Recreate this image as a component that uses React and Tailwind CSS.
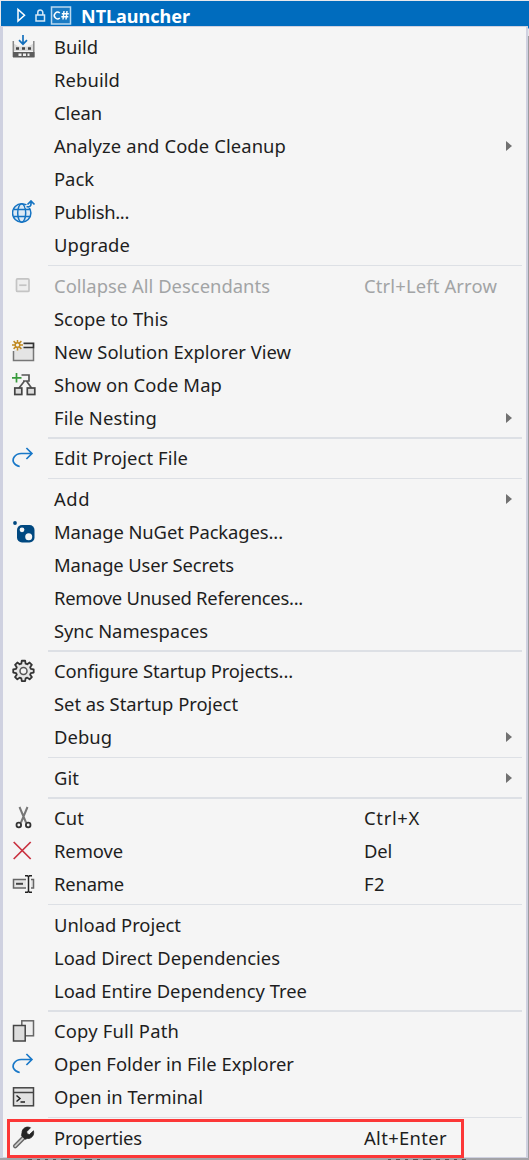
import { useLayoutEffect, useRef } from 'react';

const S = ({ children, ...p }) => (
  <svg width="24" height="24" viewBox="0 0 24 24" fill="none" strokeWidth="1.5" {...p}>{children}</svg>
);

const icons = {
  build: (
    <S>
      <path d="M1.5 8.500l5.500 3h9l5.500-3V16h-20z" fill="#d9d9d9" />
      <path d="M1.300 6v16M21.800 6v16" stroke="#888" />
      <path d="M1 17h21.500v5.500H1z" fill="#5c5c5c" />
      <path d="M4 13.500h3M10 13.500h3M16 13.500h3" stroke="#444" strokeWidth="2.500" />
      <path d="M6.500 19.700h3M11 19.700h3M15.500 19.700h2" stroke="#eee" strokeWidth="2.500" />
      <path d="M11 0v9M7 5.200l4 4 4-4" stroke="#1470bd" strokeWidth="1.700" />
    </S>
  ),
  publish: (
    <S stroke="#1573c2" strokeWidth="1.5">
      <circle cx="9.700" cy="13" r="9.200" fill="#dce9f4" />
      <ellipse cx="9.700" cy="13" rx="4" ry="9.200" />
      <path d="M1.500 9.500h16.500M1.500 16.500h16.500" />
      <path d="M13.500 6.500h5V2" stroke="#f5f5f5" strokeWidth="3" />
      <path d="M14.500 6.500c3 1 4.500-.5 4.500-2.500V1.500M15.500 4.500l3.500-3.500L22.500 4.500" strokeWidth="1.700" />
    </S>
  ),
  collapse: (
    <S stroke="#c4c4c4" strokeWidth="1.7">
      <rect x="4.500" y="4.900" width="12.500" height="12.500" rx="1" fill="#eee" />
      <path d="M7.200 11.200h7.300" />
    </S>
  ),
  view: (
    <S>
      <path d="M1.500 11v9.500h20V5.500H12z" fill="#e4e4e4" />
      <path d="M1.500 11v9.500h20V8" stroke="#777" />
      <path d="M11.500 3.300h10v4.200H11.500" stroke="#333" strokeWidth="1.700" />
      <path d="M5.500-.5v11M0 5h11M1.600 1.100l7.800 7.800M9.400 1.100L1.600 8.900" stroke="#c08a22" />
      <circle cx="5.500" cy="5" r="2.300" fill="#f5f5f5" stroke="#c08a22" />
    </S>
  ),
  map: (
    <S stroke="#444" strokeWidth="1.700">
      <path d="M9.500 2h7.500v6h-6M12.500 8l-5.500 7M14.500 8l5 7" stroke="#555" />
      <rect x="2.800" y="15" width="7" height="6.500" fill="#ddd" />
      <rect x="15.300" y="15" width="7.500" height="6.500" fill="#ddd" />
      <path d="M4.500 0v9.500M0 4.800H9.500" stroke="#389b3c" />
    </S>
  ),
  redo: (
    <S stroke="#1978c8" strokeWidth="1.7">
      <path d="M7.700 20.500C1.700 19.500-.3 14.500 2.200 11 3.700 8.800 6.200 7.500 9.200 7.500h11M14.400 2l5.500 5.500-5.500 5.500" />
    </S>
  ),
  nuget: (
    <S>
      <circle cx="3" cy="3" r="1.900" fill="#004880" />
      <rect x="5" y="5" width="17.500" height="17.500" rx="5" fill="#004880" />
      <circle cx="10" cy="9.800" r="2.400" fill="#f5f5f5" />
      <circle cx="16.700" cy="16.700" r="3.500" fill="#f5f5f5" />
    </S>
  ),
  gear: (
    <S stroke="#333" strokeWidth="1.900" strokeLinejoin="round">
      <path transform="translate(.3 .3) scale(.95)" d="M10 1.500h3.500l.5 3 1.700.7 2.500-1.800 2.400 2.400-1.800 2.500.7 1.700 3 .5V14l-3 .5-.7 1.700 1.800 2.500-2.400 2.400-2.500-1.800-1.700.7-.5 3H10l-.5-3-1.700-.7-2.500 1.800-2.400-2.400 1.800-2.500L4 14.500 1 14v-3.500l3-.5.7-1.700-1.800-2.500 2.400-2.400 2.500 1.800 1.700-.7z" fill="#e6e6e6" />
      <circle cx="11.500" cy="12" r="3.500" fill="#f5f5f5" stroke="#555" strokeWidth="1.500" />
    </S>
  ),
  cut: (
    <S stroke="#333" strokeWidth="1.800">
      <path d="M7.500 1L14 16.500M15.500 1L9 16.500" stroke="#777" strokeWidth="2" />
      <circle cx="6.800" cy="19" r="2.300" />
      <circle cx="16.200" cy="19" r="2.300" />
    </S>
  ),
  remove: <S stroke="#c9303e" strokeWidth="1.7"><path d="M1.700 3l17 17M18.700 3l-17 17" /></S>,
  rename: (
    <S stroke="#666">
      <path d="M14 7.500H1.500v8.500H14M19 7.500h2.500v8.500h-2.500" fill="#e5e5e5" />
      <path d="M4 11.800h7" strokeWidth="2" stroke="#444" />
      <path d="M13 3.800h2.500l1 1 1-1H20M16.500 4.500v15M13 20.200h2.500l1-1 1 1H20" stroke="#222" />
    </S>
  ),
  copy: (
    <S stroke="#444">
      <rect x="9.800" y="1.800" width="11.700" height="15" fill="#eee" stroke="#666" />
      <rect x="1.500" y="6.500" width="11.700" height="15.500" fill="#ddd" />
    </S>
  ),
  terminal: (
    <S stroke="#444">
      <rect x="1.500" y="2.800" width="20" height="18" fill="#e2e2e2" />
      <path d="M1.500 7.500h20" />
      <path d="M4.500 10.500l3.500 3-3.500 3M8.500 17h4.500" stroke="#222" />
    </S>
  ),
  wrench: (
    <S>
      <path d="M3.200 20.200l10-10" stroke="#666" strokeWidth="4.500" strokeLinecap="round" />
      <path d="M3.200 20.200l10-10" stroke="#ccc" strokeWidth="1.700" strokeLinecap="round" />
      <path d="M18.500 1.700l-3.800 4 .5 2.300 2.300.5 4-3.700c1 4.500-2 8-6 7.700l-2.500.7-3.500-3.500.5-3c0-4 4-7 8.500-5z" fill="#252525" stroke="#252525" strokeWidth=".8" />
    </S>
  ),
};

// label, label width, icon, shortcut ('>' opens a submenu), shortcut width, disabled
const groups = [
  [['Build', 44, 'build'], ['Rebuild', 66], ['Clean', 48], ['Analyze and Code Cleanup', 232, null, '>'], ['Pack', 40], ['Publish...', 75, 'publish'], ['Upgrade', 76]],
  [['Collapse All Descendants', 216, 'collapse', 'Ctrl+Left Arrow', 133, true], ['Scope to This', 114], ['New Solution Explorer View', 237, 'view'], ['Show on Code Map', 168, 'map'], ['File Nesting', 103, null, '>']],
  [['Edit Project File', 134, 'redo']],
  [['Add', 36, null, '>'], ['Manage NuGet Packages...', 229, 'nuget'], ['Manage User Secrets', 180], ['Remove Unused References...', 249], ['Sync Namespaces', 154]],
  [['Configure Startup Projects...', 239, 'gear'], ['Set as Startup Project', 184], ['Debug', 58, null, '>']],
  [['Git', 25, null, '>']],
  [['Cut', 30, 'cut', 'Ctrl+X', 56], ['Remove', 69, 'remove', 'Del', 28], ['Rename', 70, 'rename', 'F2', 21]],
  [['Unload Project', 127], ['Load Direct Dependencies', 226], ['Load Entire Dependency Tree', 253]],
  [['Copy Full Path', 125, 'copy'], ['Open Folder in File Explorer', 240, 'redo'], ['Open in Terminal', 149, 'terminal']],
  [['Properties', 88, 'wrench', 'Alt+Enter', 83]],
];

// Spaces the letters so that the text takes the given width.
function Fit({ text, width }) {
  const ref = useRef(null);
  useLayoutEffect(() => {
    const el = ref.current;
    el.style.letterSpacing = '0px';
    const natural = el.getBoundingClientRect().width;
    el.style.letterSpacing = `${(width - natural) / text.length}px`;
  }, [text, width]);
  return <span ref={ref} className="block w-max pb-[2px] leading-[26px]">{text}</span>;
}

function Row({ item: [label, width, icon, extra, extraWidth, disabled] }) {
  return (
    <div className={`flex h-[33px] items-center whitespace-nowrap ${disabled ? 'text-[#a2a4a5]' : 'text-[#1e1e1e]'}`}>
      <div className="ml-[9px] w-[42px] shrink-0 pb-[2px]">{icon && icons[icon]}</div>
      <div className="w-[310px] shrink-0"><Fit text={label} width={width} /></div>
      {extra === '>' ? (
        <svg className="mb-px ml-[141px]" width="7" height="10" viewBox="0 0 7 10"><path d="M1 0l6 5-6 5z" fill="#717171" /></svg>
      ) : extra && <Fit text={extra} width={extraWidth} />}
    </div>
  );
}

export default function App() {
  return (
    <div className="relative flex h-[1160px] w-[529px] flex-col overflow-hidden bg-[#9b9b9f] font-['Noto_Sans',sans-serif] text-[18.4px]">
      <header className="flex h-[26px] shrink-0 items-center border-t border-l border-[#e8e8ec] bg-[#006cbe] pt-[5px] pb-[1px] text-white">
        <svg className="ml-[15px] shrink-0" width="58" height="20" viewBox="0 0 58 20" fill="none" stroke="white" strokeWidth="1.5">
          <path d="M2 3.500v11.500l6.500-5.700z" />
          <path d="M20 9h8.500v6h-8.500zM21.800 9V6.500a2.500 2.500 0 0 1 5 0V9" stroke="#d5e7f6" />
          <rect x="35.500" y="1" width="19" height="17" stroke="#b9d8f0" fill="#1a7bc4" />
          <path d="M43.800 7a3.300 3.300 0 1 0 0 5" />
          <path d="M48 5l-1 8.500M51 5l-1 8.500M45.800 7.800h7M45.300 10.800h7" strokeWidth="1.400" />
        </svg>
        <span className="ml-[7px] pt-[2px] text-[18px] font-bold">NTLauncher</span>
      </header>
      <main className="mr-[1px] h-[1132px] shrink-0 border-t border-r-2 border-b border-l-3 border-[#cfd1e0] bg-[#f5f5f5] pt-[4px]">
        {groups.map((g, i) => (
          <section key={i}>
            {i > 0 && (
              <div className={i % 2 ? 'h-[8px] pt-[3px]' : 'h-[7px] pt-[2px]'}>
                <div className={`mr-[4px] ml-[45px] bg-[#dde0e5] ${i % 2 ? 'h-px' : 'h-[2px]'}`} />
              </div>
            )}
            {g.map((item) => <Row key={item[0]} item={item} />)}
          </section>
        ))}
      </main>
      <footer className="flex h-[2px] shrink-0 items-end gap-[5px] bg-[#a3a3a7] pl-[28px]">
        {[4, 3, 3, 3, 8, 6, 7, 3].map((w, i) => <i key={i} className="h-px bg-[#555]" style={{ width: w }} />)}
        <i className="w-[278px]" />
        {[3, 4, 3, 5, 8, 4, 4, 3, 4].map((w, i) => <i key={i} className="h-px bg-[#555]" style={{ width: w }} />)}
      </footer>
      <div className="absolute top-[26px] right-0 h-[10px] w-px bg-linear-to-b from-[#006cbe] from-20% to-[#e5e5e8] to-30%" />
      <div className="absolute top-[1119px] left-[7px] h-[39px] w-[457px] border-3 border-[#fc3737]" />
    </div>
  );
}
